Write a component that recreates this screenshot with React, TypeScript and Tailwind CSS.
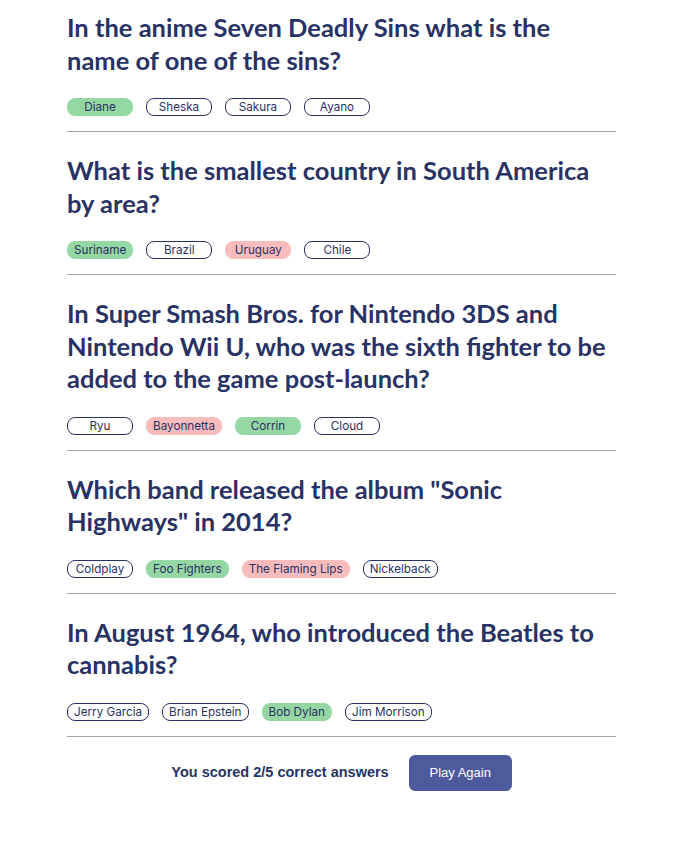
import React from 'react';

type Question = {
  question: string;
  answers: string[];
  correct: string;
  picked: string;
};

const questions: Question[] = [
  {
    question: 'In the anime Seven Deadly Sins what is the name of one of the sins?',
    answers: ['Diane', 'Sheska', 'Sakura', 'Ayano'],
    correct: 'Diane',
    picked: 'Diane',
  },
  {
    question: 'What is the smallest country in South America by area?',
    answers: ['Suriname', 'Brazil', 'Uruguay', 'Chile'],
    correct: 'Suriname',
    picked: 'Uruguay',
  },
  {
    question:
      'In Super Smash Bros. for Nintendo 3DS and Nintendo Wii U, who was the sixth fighter to be added to the game post-launch?',
    answers: ['Ryu', 'Bayonnetta', 'Corrin', 'Cloud'],
    correct: 'Corrin',
    picked: 'Bayonnetta',
  },
  {
    question: 'Which band released the album "Sonic Highways" in 2014?',
    answers: ['Coldplay', 'Foo Fighters', 'The Flaming Lips', 'Nickelback'],
    correct: 'Foo Fighters',
    picked: 'The Flaming Lips',
  },
  {
    question: 'In August 1964, who introduced the Beatles to cannabis?',
    answers: ['Jerry Garcia', 'Brian Epstein', 'Bob Dylan', 'Jim Morrison'],
    correct: 'Bob Dylan',
    picked: 'Bob Dylan',
  },
];

function AnswerPill({ text, correct, picked }: { text: string; correct: boolean; picked: boolean }) {
  let cls = 'border border-[#293264] bg-white';
  if (correct) cls = 'border border-[#94d7a2] bg-[#94d7a2]';
  else if (picked) cls = 'border border-[#f8bcbc] bg-[#f8bcbc]';
  return (
    <span
      className={`${cls} min-w-[66px] h-[18px] px-[6px] rounded-[8px] text-[11.7px] leading-[16px] text-[#293264] flex items-center justify-center`}
    >
      {text}
    </span>
  );
}

export default function App() {
  const score = questions.filter((q) => q.picked === q.correct).length;

  return (
    <div className="bg-white min-h-[860px] pl-[67px] pr-[77px] pt-[11px] font-['Inter',sans-serif]">
      {questions.map((q) => (
        <div key={q.question} className="border-b border-[#a3a3a3] pb-[15px] mb-[22px]">
          <h2 className="max-w-[540px] text-[25.5px] leading-[32.5px] font-bold text-[#293264] font-['Lato',sans-serif]">
            {q.question}
          </h2>
          <div className="flex gap-[13px] mt-[22px]">
            {q.answers.map((a) => (
              <AnswerPill key={a} text={a} correct={a === q.correct} picked={a === q.picked} />
            ))}
          </div>
        </div>
      ))}
      <div className="flex items-center justify-center gap-[20px] -mt-[4px]">
        <span className="text-[14.5px] font-bold text-[#293264] font-['Liberation_Sans',sans-serif]">
          You scored {score}/{questions.length} correct answers
        </span>
        <button className="w-[103px] h-[36px] rounded-[6px] bg-[#4d5b9e] text-white text-[13px] font-['Liberation_Sans',sans-serif]">
          Play Again
        </button>
      </div>
    </div>
  );
}
